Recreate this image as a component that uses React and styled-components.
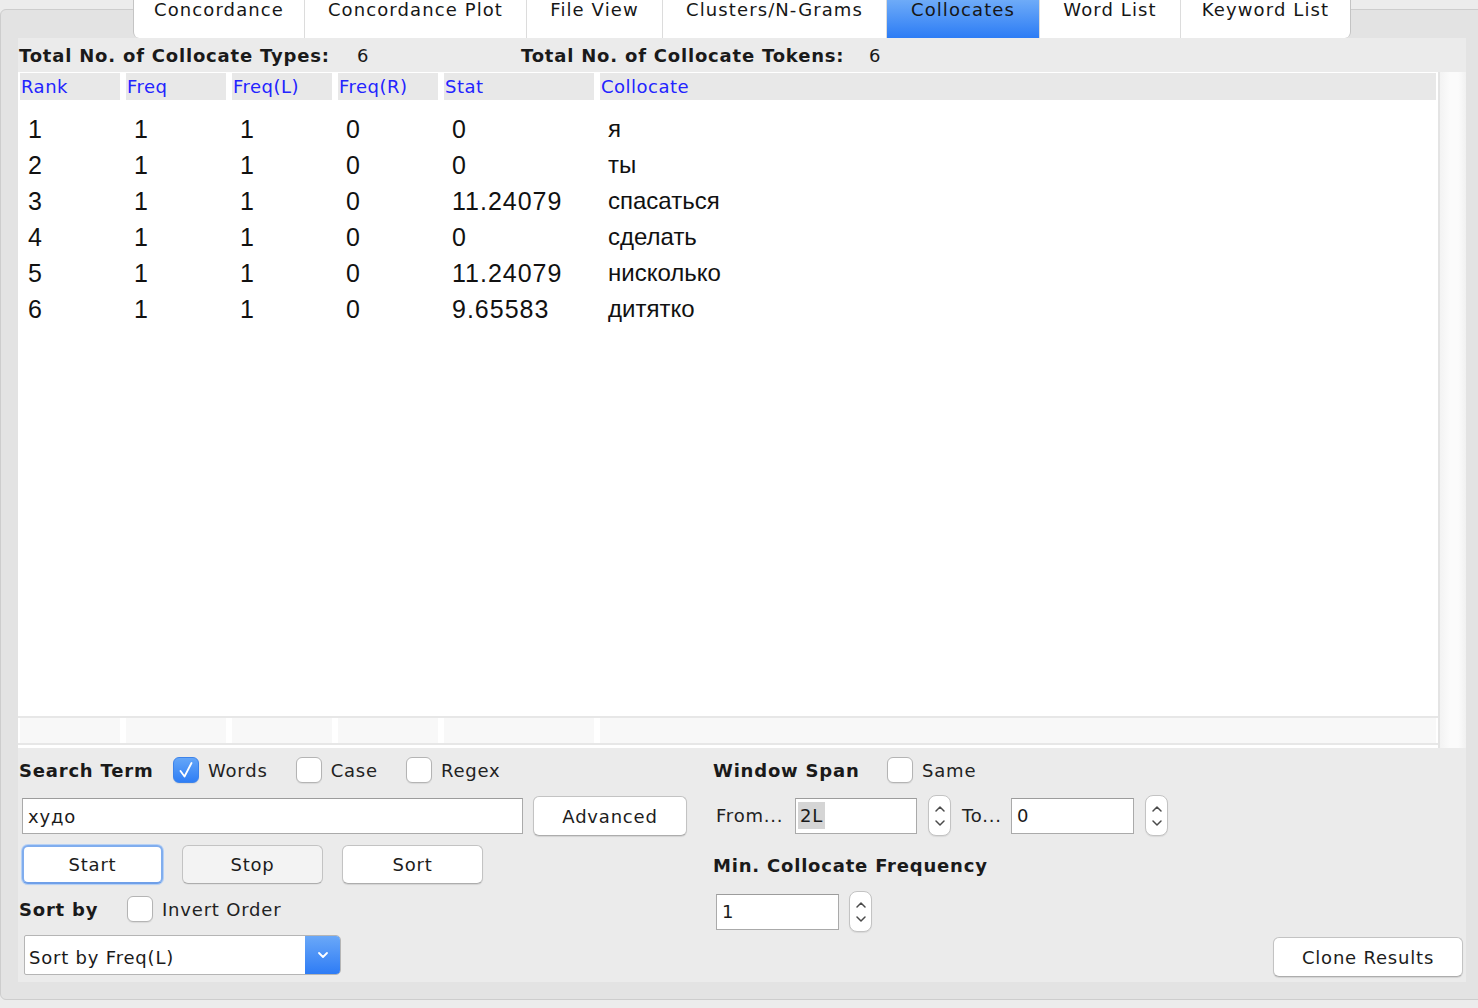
import React from 'react';
import styled, { createGlobalStyle } from 'styled-components';

const GlobalStyle = createGlobalStyle`
  html, body { margin: 0; padding: 0; background: #ececec; }
  body { font-family: "DejaVu Sans", "Noto Sans", sans-serif; }
  #root { width: 1478px; height: 1008px; overflow: hidden; }
  * { box-sizing: border-box; }
`;

const UI = `"DejaVu Sans", "Noto Sans", sans-serif`;
const DATA = `"Liberation Sans", Arial, "Noto Sans", sans-serif`;

const Window = styled.div`
  width: 1478px;
  height: 1008px;
  padding-top: 9px;
  background: #ececec;
  overflow: hidden;
  font-family: ${UI};
  font-size: 18px;
  letter-spacing: 0.8px;
  color: #1d1d1d;
`;

const Pane = styled.div`
  width: 1500px;
  height: 991px;
  background: #e3e3e3;
  border: 1px solid #cdcdcd;
  border-radius: 6px;
  display: flex;
  flex-direction: column;
`;

const TabStrip = styled.div`
  display: flex;
  height: 38px;
  margin: -10px 0 0 132px;
`;

const Tab = styled.div`
  width: ${p => p.$w}px;
  height: 38px;
  padding-top: 1px;
  line-height: 18px;
  letter-spacing: 1.1px;
  text-align: center;
  white-space: nowrap;
  color: #161616;
  background: ${p => (p.$active ? 'linear-gradient(#6eabf8, #2c7cf5)' : '#ffffff')};
  border-right: 1px solid #dcdcdc;
  &:first-child {
    border-left: 1px solid #c4c4c4;
    border-bottom-left-radius: 6px;
  }
  &:last-child {
    border-right: 1px solid #c4c4c4;
    border-bottom-right-radius: 6px;
  }
`;

const Panel = styled.div`
  margin-left: 17px;
  width: 1448px;
  height: 944px;
  background: #ebebeb;
  display: flex;
  flex-direction: column;
`;

const StatsRow = styled.div`
  height: 34px;
  padding-top: 1px;
  display: grid;
  grid-template-columns: 338px 164px 348px auto;
  align-items: center;
  padding-left: 1px;
`;

const BoldLabel = styled.span`
  font-weight: bold;
  letter-spacing: 0.8px;
  white-space: nowrap;
  color: #1a1a1a;
  width: ${p => (p.$w ? `${p.$w}px` : 'auto')};
  flex-shrink: 0;
`;

const StatValue = styled.span`
  color: #1a1a1a;
`;

const TableArea = styled.div`
  height: 676px;
  display: flex;
`;

const TableBody = styled.div`
  flex: 1;
  background: #ffffff;
  display: flex;
  flex-direction: column;
  padding: 1px 0 3px;
`;

const ScrollTrack = styled.div`
  width: 28px;
  border-left: 2px solid #e4e4e4;
  background: linear-gradient(to right, #f3f3f3, #fbfbfb 40%, #fbfbfb 70%, #f1f1f1);
`;

const COLS = '100px 100px 100px 100px 150px 1fr';

const HeaderRow = styled.div`
  display: grid;
  grid-template-columns: ${COLS};
  column-gap: 6px;
  padding: 0 2px;
  height: 27px;
`;

const HeaderCell = styled.div`
  background: #e8e8e8;
  color: #2323ff;
  line-height: 27px;
  padding-left: 1px;
  letter-spacing: 0.5px;
`;

const Rows = styled.div`
  flex: 1;
  padding: 11px 2px 0;
`;

const DataRow = styled.div`
  display: grid;
  grid-template-columns: ${COLS};
  column-gap: 6px;
  height: 36px;
  align-items: center;
  font-family: ${DATA};
  color: #111111;
`;

const DataCell = styled.div`
  padding-left: 8px;
  white-space: nowrap;
  font-size: ${p => (p.$text ? 24 : 25)}px;
  letter-spacing: ${p => (p.$text ? 0 : 1)}px;
`;

const FooterRow = styled.div`
  display: grid;
  grid-template-columns: ${COLS};
  column-gap: 6px;
  padding: 0 2px;
  height: 29px;
  border-top: 2px solid #e7e7e7;
  border-bottom: 2px solid #e7e7e7;
`;

const FooterCell = styled.div`
  background: #f8f8f8;
`;

const Controls = styled.div`
  flex: 1;
  display: grid;
  grid-template-columns: 695px 1fr;
  padding-top: 9px;
`;

const Column = styled.div`
  display: flex;
  flex-direction: column;
`;

const LineRow = styled.div`
  display: flex;
  align-items: center;
  height: ${p => p.$h}px;
  margin-top: ${p => p.$mt || 0}px;
  padding-left: ${p => p.$pl || 0}px;
  gap: ${p => p.$gap || 0}px;
  justify-content: ${p => (p.$end ? 'flex-end' : 'flex-start')};
  padding-right: ${p => p.$pr || 0}px;
`;

const CheckGroup = styled.label`
  display: flex;
  align-items: center;
  gap: 9px;
  margin-right: 28px;
  white-space: nowrap;
  color: #222;
`;

const Box = styled.span`
  width: 26px;
  height: 26px;
  border-radius: 6px;
  display: flex;
  align-items: center;
  justify-content: center;
  background: ${p => (p.$on ? 'linear-gradient(#64a6f8, #2f7ef5)' : '#ffffff')};
  border: 1px solid ${p => (p.$on ? '#3d83ea' : '#b4b4b4')};
  box-shadow: 0 1px 1px rgba(0, 0, 0, 0.08);
  flex-shrink: 0;
`;

const TextInput = styled.div`
  width: ${p => p.$w}px;
  height: 36px;
  background: #fff;
  border: 1px solid #aaaaaa;
  border-top-color: #9c9c9c;
  display: flex;
  align-items: center;
  padding-left: ${p => p.$pl || 5}px;
  color: #1a1a1a;
  flex-shrink: 0;
`;

const Selected = styled.span`
  background: #d5d5d5;
  padding: 3px 2px;
`;

const Button = styled.div`
  width: ${p => p.$w}px;
  height: ${p => p.$h || 40}px;
  border-radius: 6px;
  display: flex;
  align-items: center;
  justify-content: center;
  flex-shrink: 0;
  color: #1c1c1c;
  background: ${p => (p.$variant === 'dim' ? '#f3f3f3' : '#ffffff')};
  border: ${p => (p.$variant === 'focus' ? '2px solid #80adee' : '1px solid #c3c3c3')};
  border-bottom-color: ${p => (p.$variant === 'focus' ? '#6f9fe8' : '#adadad')};
  box-shadow: ${p =>
    p.$variant === 'focus'
      ? '0 0 0 1px #b5d0f5, 0 1px 1px rgba(0,0,0,0.12)'
      : p.$variant === 'dim'
      ? '0 1px 0 rgba(0,0,0,0.04)'
      : '0 1px 1px rgba(0,0,0,0.1)'};
`;

const FieldLabel = styled.span`
  width: ${p => p.$w}px;
  flex-shrink: 0;
  white-space: nowrap;
  color: #222;
`;

const Spinner = styled.div`
  width: 23px;
  height: 41px;
  border-radius: 8px;
  border: 1px solid #c3c3c3;
  background: #fff;
  box-shadow: 0 1px 1px rgba(0, 0, 0, 0.08);
  display: flex;
  align-items: center;
  justify-content: center;
  flex-shrink: 0;
`;

const Select = styled.div`
  width: 317px;
  height: 40px;
  display: flex;
  border: 1px solid #b5b5b5;
  border-radius: 2px 5px 5px 2px;
  background: #fff;
  overflow: hidden;
`;

const SelectText = styled.div`
  flex: 1;
  display: flex;
  align-items: center;
  padding: 4px 0 0 4px;
  color: #1a1a1a;
`;

const SelectArrow = styled.div`
  width: 35px;
  background: linear-gradient(#6aa8f8, #2e7cf5);
  display: flex;
  align-items: center;
  justify-content: center;
`;

const Check = ({ on, label }) => (
  <CheckGroup>
    <Box $on={on}>
      {on && (
        <svg width="18" height="20" viewBox="0 0 18 20">
          <path d="M3.5 11 L7.5 16.5 L14.5 3" fill="none" stroke="#fff" strokeWidth="1.8" strokeLinecap="round" strokeLinejoin="round" />
        </svg>
      )}
    </Box>
    {label}
  </CheckGroup>
);

const Stepper = () => (
  <Spinner>
    <svg width="12" height="30" viewBox="0 0 12 30">
      <path d="M2 10 L6 6 L10 10" fill="none" stroke="#4a4a4a" strokeWidth="1.5" strokeLinecap="round" strokeLinejoin="round" />
      <path d="M2 20 L6 24 L10 20" fill="none" stroke="#4a4a4a" strokeWidth="1.5" strokeLinecap="round" strokeLinejoin="round" />
    </svg>
  </Spinner>
);

const tabs = [
  { label: 'Concordance', w: 172 },
  { label: 'Concordance Plot', w: 222 },
  { label: 'File View', w: 136 },
  { label: 'Clusters/N-Grams', w: 224 },
  { label: 'Collocates', w: 153, active: true },
  { label: 'Word List', w: 141 },
  { label: 'Keyword List', w: 170 },
];

const headers = ['Rank', 'Freq', 'Freq(L)', 'Freq(R)', 'Stat', 'Collocate'];

const rows = [
  ['1', '1', '1', '0', '0', 'я'],
  ['2', '1', '1', '0', '0', 'ты'],
  ['3', '1', '1', '0', '11.24079', 'спасаться'],
  ['4', '1', '1', '0', '0', 'сделать'],
  ['5', '1', '1', '0', '11.24079', 'нисколько'],
  ['6', '1', '1', '0', '9.65583', 'дитятко'],
];

export default function App() {
  return (
    <>
      <GlobalStyle />
      <Window>
        <Pane>
          <TabStrip>
            {tabs.map(t => (
              <Tab key={t.label} $w={t.w} $active={t.active}>
                {t.label}
              </Tab>
            ))}
          </TabStrip>
          <Panel>
            <StatsRow>
              <BoldLabel>Total No. of Collocate Types:</BoldLabel>
              <StatValue>6</StatValue>
              <BoldLabel>Total No. of Collocate Tokens:</BoldLabel>
              <StatValue>6</StatValue>
            </StatsRow>
            <TableArea>
              <TableBody>
                <HeaderRow>
                  {headers.map(h => (
                    <HeaderCell key={h}>{h}</HeaderCell>
                  ))}
                </HeaderRow>
                <Rows>
                  {rows.map(r => (
                    <DataRow key={r[0]}>
                      {r.map((c, i) => (
                        <DataCell key={i} $text={i === 5}>{c}</DataCell>
                      ))}
                    </DataRow>
                  ))}
                </Rows>
                <FooterRow>
                  {headers.map(h => (
                    <FooterCell key={h} />
                  ))}
                </FooterRow>
              </TableBody>
              <ScrollTrack />
            </TableArea>
            <Controls>
              <Column>
                <LineRow $h={26} $pl={1}>
                  <BoldLabel $w={154}>Search Term</BoldLabel>
                  <Check on label="Words" />
                  <Check label="Case" />
                  <Check label="Regex" />
                </LineRow>
                <LineRow $h={40} $mt={13} $pl={4} $gap={10}>
                  <TextInput $w={501}>худо</TextInput>
                  <Button $w={154}>Advanced</Button>
                </LineRow>
                <LineRow $h={39} $mt={9} $pl={4} $gap={19}>
                  <Button $w={141} $h={39} $variant="focus">Start</Button>
                  <Button $w={141} $h={39} $variant="dim">Stop</Button>
                  <Button $w={141} $h={39}>Sort</Button>
                </LineRow>
                <LineRow $h={26} $mt={12} $pl={1}>
                  <BoldLabel $w={108}>Sort by</BoldLabel>
                  <Check label="Invert Order" />
                </LineRow>
                <LineRow $h={40} $mt={13} $pl={6}>
                  <Select>
                    <SelectText>Sort by Freq(L)</SelectText>
                    <SelectArrow>
                      <svg width="14" height="10" viewBox="0 0 14 10">
                        <path d="M3 3 L7 7 L11 3" fill="none" stroke="#fff" strokeWidth="1.8" strokeLinecap="round" strokeLinejoin="round" />
                      </svg>
                    </SelectArrow>
                  </Select>
                </LineRow>
              </Column>
              <Column>
                <LineRow $h={26}>
                  <BoldLabel $w={174}>Window Span</BoldLabel>
                  <Check label="Same" />
                </LineRow>
                <LineRow $h={41} $mt={12} $pl={3} $gap={11}>
                  <FieldLabel $w={68}>From...</FieldLabel>
                  <TextInput $w={122} $pl={2}>
                    <Selected>2L</Selected>
                  </TextInput>
                  <Stepper />
                  <FieldLabel $w={38}>To...</FieldLabel>
                  <TextInput $w={123}>0</TextInput>
                  <Stepper />
                </LineRow>
                <LineRow $h={20} $mt={19}>
                  <BoldLabel>Min. Collocate Frequency</BoldLabel>
                </LineRow>
                <LineRow $h={41} $mt={16} $pl={3} $gap={10}>
                  <TextInput $w={123}>1</TextInput>
                  <Stepper />
                </LineRow>
                <LineRow $h={40} $mt={5} $end $pr={3}>
                  <Button $w={190}>Clone Results</Button>
                </LineRow>
              </Column>
            </Controls>
          </Panel>
        </Pane>
      </Window>
    </>
  );
}
